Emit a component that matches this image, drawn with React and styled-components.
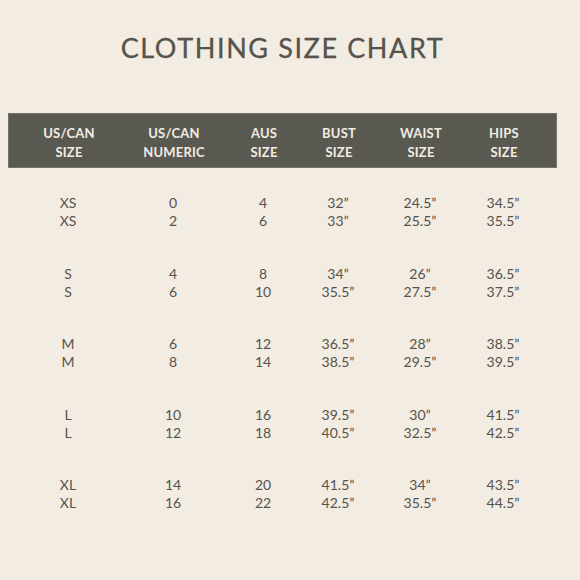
import React from 'react'
import styled, { createGlobalStyle } from 'styled-components'

const GlobalStyle = createGlobalStyle`
  html, body {
    margin: 0;
    padding: 0;
    background: #f3ece3;
  }
  body {
    font-family: 'Lato', 'Liberation Sans', sans-serif;
  }
`

const Page = styled.div`
  width: 580px;
  height: 580px;
  background: #f3ece3;
  padding: 0 0 0 8px;
  box-sizing: border-box;
  overflow: hidden;
`

const Title = styled.h1`
  margin: 0;
  padding: 32px 23px 0 0;
  height: 113px;
  box-sizing: border-box;
  text-align: center;
  font-size: 27px;
  font-weight: 400;
  letter-spacing: 1.6px;
  color: #55534b;
  line-height: 32px;
  -webkit-text-stroke: 0.3px #55534b;
`

const Grid = styled.div`
  display: grid;
  grid-template-columns: 120px 90px 90px 60px 104px 62px;
  width: 549px;
  box-sizing: border-box;
`

const HeaderBar = styled(Grid)`
  height: 55px;
  padding: 10px 0 0;
  background: #5a5951;
  border: 1px solid #76746b;
`

const HeaderCell = styled.div`
  text-align: center;
  color: #f1ece4;
  font-size: 13px;
  font-weight: 700;
  line-height: 19px;
  letter-spacing: 0.2px;
  white-space: nowrap;
`

const Body = styled.div`
  display: flex;
  flex-direction: column;
  gap: 34.5px;
  padding-top: 26px;
`

const Cell = styled.div`
  text-align: center;
  color: #55534b;
  font-size: 14px;
  line-height: 18px;
  white-space: nowrap;
`

const headers = [
  ['US/CAN', 'SIZE'],
  ['US/CAN', 'NUMERIC'],
  ['AUS', 'SIZE'],
  ['BUST', 'SIZE'],
  ['WAIST', 'SIZE'],
  ['HIPS', 'SIZE'],
]

const q = '\u201D'

const groups = [
  [['XS', 'XS'], ['0', '2'], ['4', '6'], ['32' + q, '33' + q], ['24.5' + q, '25.5' + q], ['34.5' + q, '35.5' + q]],
  [['S', 'S'], ['4', '6'], ['8', '10'], ['34' + q, '35.5' + q], ['26' + q, '27.5' + q], ['36.5' + q, '37.5' + q]],
  [['M', 'M'], ['6', '8'], ['12', '14'], ['36.5' + q, '38.5' + q], ['28' + q, '29.5' + q], ['38.5' + q, '39.5' + q]],
  [['L', 'L'], ['10', '12'], ['16', '18'], ['39.5' + q, '40.5' + q], ['30' + q, '32.5' + q], ['41.5' + q, '42.5' + q]],
  [['XL', 'XL'], ['14', '16'], ['20', '22'], ['41.5' + q, '42.5' + q], ['34' + q, '35.5' + q], ['43.5' + q, '44.5' + q]],
]

const App = () => {
  return (
    <Page>
      <GlobalStyle />
      <Title>CLOTHING SIZE CHART</Title>
      <HeaderBar>
        {headers.map((h, id) => (
          <HeaderCell key={id}>
            {h[0]}
            <br />
            {h[1]}
          </HeaderCell>
        ))}
      </HeaderBar>
      <Body>
        {groups.map((g, gid) => (
          <Grid key={gid}>
            {g.map((c, cid) => (
              <Cell key={cid}>
                {c[0]}
                <br />
                {c[1]}
              </Cell>
            ))}
          </Grid>
        ))}
      </Body>
    </Page>
  )
}

export default App
